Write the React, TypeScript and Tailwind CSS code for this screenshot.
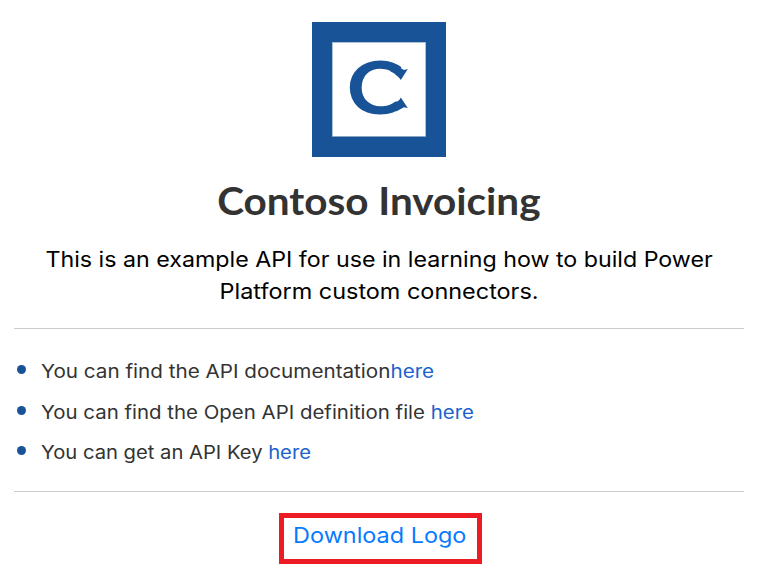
function Logo() {
  return (
    <svg width="134" height="135" viewBox="0 0 134 135" className="block" role="img" aria-label="Contoso logo">
      <rect width="134" height="135" fill="#185397" />
      <rect x="20.3" y="20.3" width="93.4" height="94" fill="#fff" stroke="#a5bdcb" strokeWidth="0.6" />
      <text transform="translate(34.5 92.4) scale(1.17 1)" fontFamily="Lato, sans-serif" fontWeight="700" fontSize="73.5" fill="#185397">C</text>
      <path d="M84 43.5 L92 47.9 L95.8 47 L88.8 58 L87.3 56 L82 51.3 L78 49Z M84 89.5 L92 85.2 L95.8 86 L88.8 75.5 L87.3 78 L82 81.7 L78 84Z" fill="#185397" />
    </svg>
  );
}

function Bullet({ text, gap, className }: { text: string; gap?: boolean; className: string }) {
  return (
    <li className="flex h-[40.5px] items-start">
      <span className="mt-[9px] mr-[15px] size-[9px] shrink-0 rounded-full bg-[#185397]" />
      <span className={"origin-left whitespace-pre leading-[30px] " + className}>
        {text}
        {gap ? " " : ""}
        <a href="#" className="text-[#1a62cc]">here</a>
      </span>
    </li>
  );
}

export default function App() {
  return (
    <main className="flex h-[583px] w-[757px] flex-col items-center overflow-hidden bg-white pt-[22px] font-['Inter',sans-serif]">
      <Logo />
      <h1 className="mt-[18px] h-[50px] scale-x-[1.065] whitespace-nowrap text-[38px] leading-[50px] font-bold text-[#333] font-['Lato',sans-serif]">Contoso Invoicing</h1>
      <div className="mt-[18px] pl-[1.5px] text-center text-[21.3px] leading-[32px] whitespace-nowrap text-black">
        <p className="scale-x-[1.09]">This is an example API for use in learning how to build Power</p>
        <p className="scale-x-[1.1]">Platform custom connectors.</p>
      </div>
      <hr className="mt-[21px] w-[730px] border-t border-[#ccc]" />
      <ul className="mt-[27px] h-[122px] w-[724px] text-[18.5px] text-[#333]">
        <Bullet text="You can find the API documentation" className="scale-x-[1.116]" />
        <Bullet text="You can find the Open API definition file" gap className="scale-x-[1.104]" />
        <Bullet text="You can get an API Key" gap className="scale-x-[1.092]" />
      </ul>
      <hr className="mt-[13px] w-[730px] border-t border-[#ccc]" />
      <a href="#" className="mt-[21px] ml-[3px] flex h-[51px] w-[203px] justify-center border-[5px] border-[#ed1c24] text-[21.3px] leading-[35px] whitespace-nowrap text-[#077bff]">
        <span className="h-[35px] scale-x-[1.1]">Download Logo</span>
      </a>
    </main>
  );
}
